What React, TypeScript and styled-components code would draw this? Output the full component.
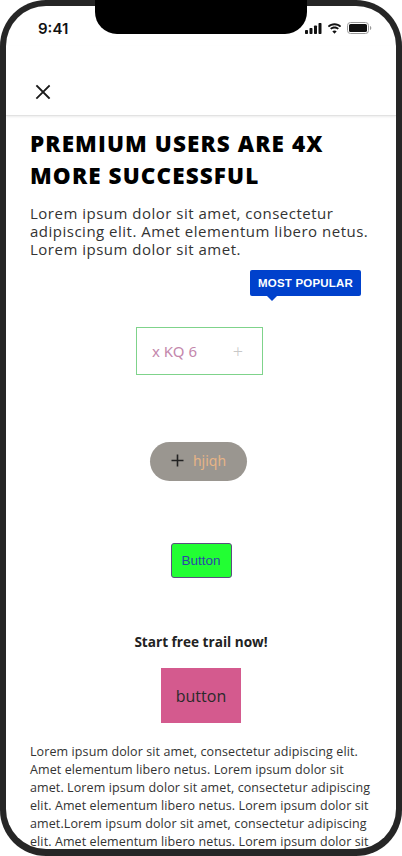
import React from "react";
import styled, { createGlobalStyle } from "styled-components";

const GlobalStyle = createGlobalStyle`
  html, body {
    margin: 0;
    padding: 0;
    background: #ffffff;
  }
  * {
    box-sizing: border-box;
  }
`;

const Device = styled.div`
  width: 402px;
  height: 856px;
  padding: 6px 6px 7px;
  background: #262626;
  border-radius: 46px;
  position: relative;
  overflow: hidden;
`;

const Screen = styled.div`
  width: 100%;
  height: 100%;
  background: #ffffff;
  border-radius: 40px;
  overflow: hidden;
  display: flex;
  flex-direction: column;
  font-family: "Open Sans", "Noto Sans", sans-serif;
`;

const Notch = styled.div`
  position: absolute;
  top: 0;
  left: 95px;
  width: 212px;
  height: 34px;
  background: #000000;
  border-radius: 0 0 22px 22px;
`;

const StatusBar = styled.div`
  height: 40px;
  flex: none;
  display: flex;
  align-items: center;
  justify-content: space-between;
  padding: 4px 24px 0 32px;
`;

const Clock = styled.span`
  font-family: "Inter", "Liberation Sans", sans-serif;
  font-weight: 600;
  font-size: 15px;
  color: #111;
`;

const StatusIcons = styled.div`
  display: flex;
  align-items: center;
  gap: 5px;
`;

const Header = styled.div`
  height: 70px;
  flex: none;
  display: flex;
  align-items: flex-end;
  padding: 0 0 15px 29px;
  border-bottom: 1px solid #e2e2e2;
  box-shadow: 0 1px 2px rgba(0, 0, 0, 0.08);
`;

const CloseButton = styled.button`
  border: none;
  background: none;
  padding: 0;
  width: 16px;
  height: 16px;
  display: flex;
  cursor: pointer;
`;

const Content = styled.div`
  padding: 0 24px;
  display: flex;
  flex-direction: column;
`;

const Title = styled.h1`
  margin: 12px 0 0;
  font-family: "Open Sans", sans-serif;
  font-weight: 800;
  font-size: 22.5px;
  line-height: 32px;
  letter-spacing: 1.1px;
  color: #000;
`;

const Lead = styled.p`
  margin: 12px 0 0;
  font-size: 15px;
  line-height: 18px;
  letter-spacing: 0.5px;
  color: #333;
`;

const BadgeRow = styled.div`
  display: flex;
  justify-content: flex-end;
  padding-right: 11px;
  margin-top: 12px;
`;

const Badge = styled.div`
  position: relative;
  height: 26px;
  width: 111px;
  display: flex;
  align-items: center;
  justify-content: center;
  background: #0041cc;
  color: #fff;
  border-radius: 2px;
  font-family: "Liberation Sans", "Open Sans", sans-serif;
  font-weight: 700;
  font-size: 11.5px;
  letter-spacing: 0.2px;

  &::after {
    content: "";
    position: absolute;
    left: 17px;
    bottom: -5px;
    border-left: 5px solid transparent;
    border-right: 5px solid transparent;
    border-top: 5px solid #0041cc;
  }
`;

const Centered = styled.div<{ $gap: number }>`
  display: flex;
  justify-content: center;
  margin-top: ${(p) => p.$gap}px;
`;

const Field = styled.div`
  width: 127px;
  height: 48px;
  margin-left: -3px;
  border: 1px solid #7fd38b;
  display: flex;
  align-items: center;
  justify-content: space-between;
  padding: 0 19px 0 15px;
  font-family: "Noto Sans", sans-serif;
  font-size: 15px;
  color: #c487ac;
`;

const FieldPlus = styled.span`
  color: #c8c8c8;
  font-size: 18px;
  font-weight: 300;
`;

const Pill = styled.button`
  width: 97px;
  height: 39px;
  margin-left: -5px;
  border: none;
  border-radius: 20px;
  background: #9a9690;
  display: flex;
  align-items: center;
  justify-content: center;
  gap: 9px;
  font-family: "Noto Sans", sans-serif;
  font-size: 14px;
  color: #e7b486;
  padding: 0 0 2px 0;
`;

const GreenButton = styled.button`
  width: 61px;
  height: 35px;
  border: 1px solid #5b4f7f;
  border-radius: 3px;
  background: #22ff33;
  color: #2b48a8;
  font-family: "Liberation Sans", sans-serif;
  font-size: 13.5px;
  padding: 0;
`;

const Prompt = styled.div`
  margin-top: 55px;
  text-align: center;
  font-weight: 700;
  font-size: 13.6px;
  line-height: 18px;
  color: #222;
`;

const PinkButton = styled.button`
  width: 80px;
  height: 55px;
  border: none;
  background: #d45a8e;
  color: #2a2a2a;
  font-family: "Open Sans", sans-serif;
  font-size: 16px;
  padding: 0;
`;

const Body = styled.p`
  margin: 20px 0 0;
  font-size: 12.5px;
  line-height: 18px;
  letter-spacing: 0.1px;
  color: #333;
`;

const XIcon = () => (
  <svg width="16" height="16" viewBox="0 0 16 16" fill="none">
    <path d="M2 2L14 14M14 2L2 14" stroke="#1a1a1a" strokeWidth="1.8" strokeLinecap="square" />
  </svg>
);

const PlusIcon = () => (
  <svg width="13" height="13" viewBox="0 0 13 13" fill="none">
    <path d="M6.5 0.5V12.5M0.5 6.5H12.5" stroke="#222" strokeWidth="1.6" />
  </svg>
);

const Signal = () => (
  <svg width="17" height="11" viewBox="0 0 17 11" fill="#111">
    <rect x="0" y="7" width="3" height="4" rx="0.8" />
    <rect x="4.5" y="5" width="3" height="6" rx="0.8" />
    <rect x="9" y="2.5" width="3" height="8.5" rx="0.8" />
    <rect x="13.5" y="0" width="3" height="11" rx="0.8" />
  </svg>
);

const Wifi = () => (
  <svg width="15" height="11" viewBox="0 0 15 11" fill="#111">
    <path d="M7.5 2.2c2.1 0 4 .8 5.5 2.1l1.2-1.3C12.4 1.3 10 .3 7.5.3S2.6 1.3.8 3l1.2 1.3c1.5-1.3 3.4-2.1 5.5-2.1z" />
    <path d="M7.5 5.4c1.2 0 2.3.4 3.2 1.2l1.2-1.3C10.7 4.2 9.2 3.6 7.5 3.6S4.3 4.2 3.1 5.3l1.2 1.3c.9-.8 2-1.2 3.2-1.2z" />
    <path d="M7.5 10.7l2.2-2.4c-.6-.5-1.4-.8-2.2-.8s-1.6.3-2.2.8z" />
  </svg>
);

const Battery = () => (
  <svg width="25" height="12" viewBox="0 0 25 12" fill="none">
    <rect x="0.5" y="0.5" width="21" height="11" rx="3" stroke="#999" />
    <rect x="2" y="2" width="18" height="8" rx="1.6" fill="#111" />
    <path d="M23 4v4c.8-.3 1.3-1.1 1.3-2S23.8 4.3 23 4z" fill="#999" />
  </svg>
);

export default function App() {
  return (
    <>
      <GlobalStyle />
      <Device>
        <Screen>
          <StatusBar>
            <Clock>9:41</Clock>
            <StatusIcons>
              <Signal />
              <Wifi />
              <Battery />
            </StatusIcons>
          </StatusBar>
          <Header>
            <CloseButton aria-label="Close">
              <XIcon />
            </CloseButton>
          </Header>
          <Content>
            <Title>
              PREMIUM USERS ARE 4X
              <br />
              MORE SUCCESSFUL
            </Title>
            <Lead>
              Lorem ipsum dolor sit amet, consectetur adipiscing elit. Amet
              elementum libero netus. Lorem ipsum dolor sit amet.
            </Lead>
            <BadgeRow>
              <Badge>MOST POPULAR</Badge>
            </BadgeRow>
            <Centered $gap={31}>
              <Field>
                <span>x KQ 6</span>
                <FieldPlus>+</FieldPlus>
              </Field>
            </Centered>
            <Centered $gap={67}>
              <Pill>
                <PlusIcon />
                <span>hjiqh</span>
              </Pill>
            </Centered>
            <Centered $gap={62}>
              <GreenButton>Button</GreenButton>
            </Centered>
            <Prompt>Start free trail now!</Prompt>
            <Centered $gap={17}>
              <PinkButton>button</PinkButton>
            </Centered>
            <Body>
              Lorem ipsum dolor sit amet, consectetur adipiscing elit. Amet
              elementum libero netus. Lorem ipsum dolor sit amet. Lorem ipsum
              dolor sit amet, consectetur adipiscing elit. Amet elementum libero
              netus. Lorem ipsum dolor sit amet.Lorem ipsum dolor sit amet,
              consectetur adipiscing elit. Amet elementum libero netus. Lorem
              ipsum dolor sit amet.
            </Body>
          </Content>
          <Notch />
        </Screen>
      </Device>
    </>
  );
}
